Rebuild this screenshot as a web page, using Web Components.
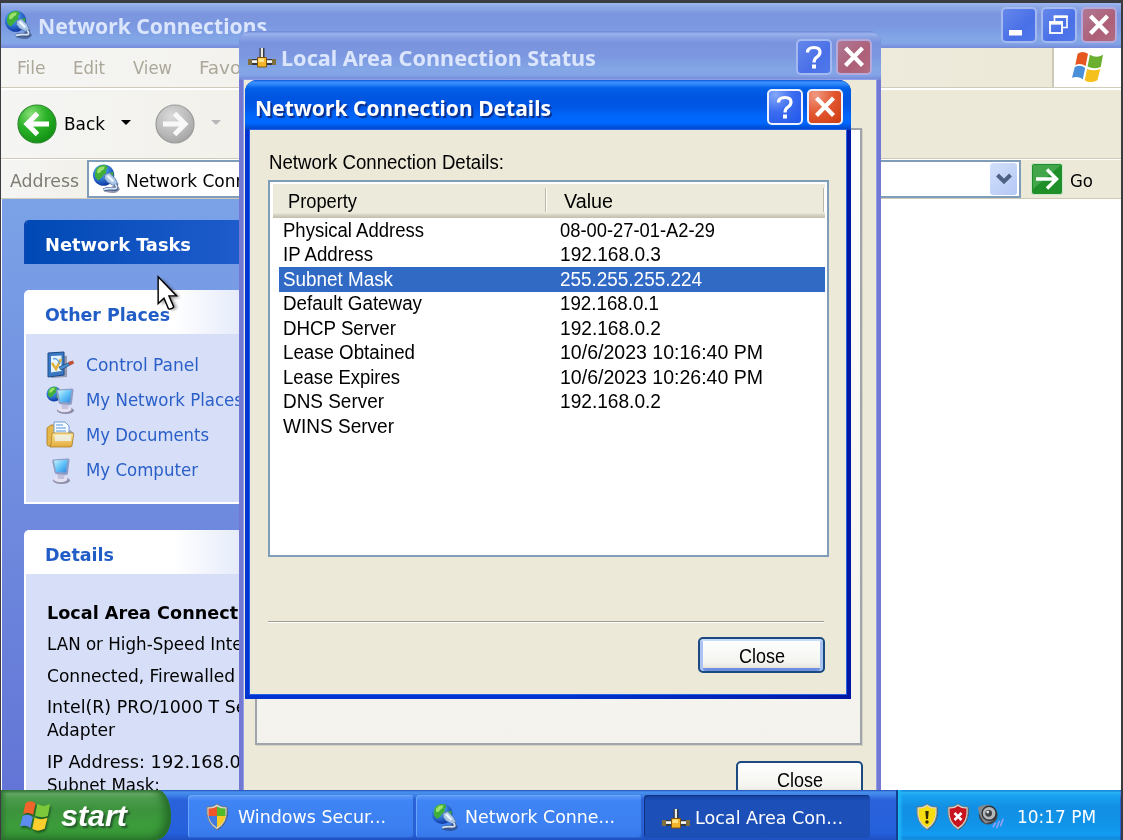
<!DOCTYPE html>
<html lang="en">
<head>
<meta charset="utf-8">
<title>Network Connections</title>
<style>
html,body{margin:0;height:100%;overflow:hidden;background:#3b3c3f}
</style>
</head>
<body>
<xp-desktop></xp-desktop>
<script>
const define = (name, html, after) => {
  const tpl = document.createElement('template');
  tpl.innerHTML = html;
  customElements.define(name, class extends HTMLElement {
    connectedCallback() {
      if (this.shadowRoot) return;
      this.attachShadow({ mode: 'open' }).appendChild(tpl.content.cloneNode(true));
      if (after) after.call(this, this.shadowRoot);
    }
  });
};

/* Single-line label. w = width in pixels of the text (or of its prefix p). */
define('xp-text', `<style>
:host{display:block;white-space:nowrap;line-height:1.2;flex:none}
span{display:inline-block;transform-origin:0 50%}
</style><span></span>`, function (r) {
  const s = r.querySelector('span'), w = +this.getAttribute('w'), t = this.getAttribute('t');
  s.textContent = this.getAttribute('p') || t;
  const k = w / s.getBoundingClientRect().width;
  s.textContent = t;
  const full = s.getBoundingClientRect().width * k;
  s.style.transform = 'scaleX(' + k + ')';
  this.style.width = full + 'px';
});

const flag = (a, b, c, d) => `<svg viewBox="0 0 36 34">
<path d="M7 3Q12-1 18 3L15.500 16Q10 12 4.500 15Z" fill="${a}"/><path d="M20 4Q27 8 34 4L31.500 17Q24 20 17.500 16.500Z" fill="${b}"/>
<path d="M4 17Q10 14 15 18L12.500 30Q7 26 1 28.500Z" fill="${c}"/><path d="M17 19Q24 22 31 19L28 31Q20 35 14.500 31Z" fill="${d}"/></svg>`;
const defs = `<defs>
<radialGradient id="gl" cx=".38" cy=".3" r=".75"><stop offset="0" stop-color="#c9ecff"/><stop offset=".35" stop-color="#3f8fe8"/><stop offset="1" stop-color="#0a2f9c"/></radialGradient>
<linearGradient id="scr" x1="0" y1="0" x2="1" y2="1"><stop offset="0" stop-color="#c8f4ff"/><stop offset=".5" stop-color="#62c4f8"/><stop offset="1" stop-color="#2f86e0"/></linearGradient>
<radialGradient id="grn" cx=".35" cy=".25" r=".85"><stop offset="0" stop-color="#8ee07c"/><stop offset=".45" stop-color="#2db42a"/><stop offset="1" stop-color="#0d8a10"/></radialGradient>
<radialGradient id="gry" cx=".4" cy=".3" r=".8"><stop offset="0" stop-color="#dadada"/><stop offset=".6" stop-color="#b9b9b9"/><stop offset="1" stop-color="#9e9e9e"/></radialGradient>
<linearGradient id="fol" x1="0" y1="0" x2="0" y2="1"><stop offset="0" stop-color="#ffe9a0"/><stop offset="1" stop-color="#e2a93a"/></linearGradient>
</defs>`;
const globe = (x, y, r) => `<g transform="translate(${x} ${y}) scale(${r / 10})"><circle r="10" fill="url(#gl)"/><path d="M-7-6Q-3-11 3-9Q5-6 2-5Q4-2 0 0Q-2 4-5 5Q-9 2-8-2ZM5-2L9-3Q10 3 6 7L3 4Z" fill="#3fae3a"/><path d="M-6-5Q-3-9 1-8Q1-5-2-4Q-3-1-6-2Z" fill="#9be06a"/></g>`;
const monitor = (x, y) => `<g transform="translate(${x} ${y})"><ellipse cx="9.500" cy="22.500" rx="8.500" ry="3.500" fill="#77738f" opacity=".75"/><ellipse cx="8.500" cy="21" rx="7" ry="3.200" fill="#e4e2f2"/><path d="M5 14H13L12 21H6Z" fill="#c4c1dc"/><path d="M1 1.500L16 .500Q18 .500 17.500 2.500L16 15Q16 17 14 17L4 16Q3 16 2.500 14L.300 3.500Q.300 1.500 1 1.500Z" fill="#8f9cc4"/><path d="M2 2.500L15.500 1.800L14 14.500L4 14Z" fill="url(#scr)"/></g>`;
const shield = inner => `<svg viewBox="0 0 24 28"><path d="M13 3Q18 6 23 5Q24 20 13 27Q2 20 3 5Q8 6 13 3" fill="#333" opacity=".55"/><path d="M12 1Q16 4.500 22 4Q23.500 20 12 26.500Q.500 20 2 4Q8 4.500 12 1Z" fill="#d9d9d3" stroke="#6e6e68" stroke-width=".8"/>${inner}</svg>`;
const ICONS = {
  net: `<svg viewBox="0 0 30 30">${defs}<path d="M12 28Q24 33 29 26L25 21Z" fill="#26325a" opacity=".5"/>${globe(12, 11.5, 11)}<path d="M13 11L18 9L24 15L27 21L22 22L16 19L13 15Z" fill="#a9c6e8" stroke="#4d6ea8" stroke-width=".8"/><path d="M16 12L22 18" stroke="#eef7ff" stroke-width="2.500"/><path d="M24 21Q28 27 22 26T12 27" fill="none" stroke="#3c5688" stroke-width="3.500"/><path d="M24 21Q28 26 22 25.500T12 26.500" fill="none" stroke="#d5e4f5" stroke-width="2"/></svg>`,
  lan: `<svg viewBox="0 0 28 22"><path d="M11.500 1H16.500V11H11.500ZM0 12H28V18H0Z" fill="#35383c"/><path d="M12.800 1H15V11H12.800ZM1 13.500H27V16H1Z" fill="#e8eae8"/><path d="M0 12H4V18H0ZM24 12H28V18H24Z" fill="#80703f"/><path d="M4 13.500H24V15H4Z" fill="#fff"/><path d="M9.500 10.500H18.500V20H9.500Z" fill="#f2b52c" stroke="#80560a"/><path d="M10.500 11.500H16V15H10.500Z" fill="#ffe488"/></svg>`,
  back: `<svg viewBox="0 0 40 40">${defs}<circle cx="20" cy="20" r="19" fill="url(#grn)" stroke="#2b8a2b" stroke-width="1.200"/><path d="M32 20H11M20.500 9.500L10 20L20.500 30.500" fill="none" stroke="#fff" stroke-width="5"/></svg>`,
  fwd: `<svg viewBox="0 0 40 40">${defs}<circle cx="20" cy="20" r="19" fill="url(#gry)" stroke="#9b9b9b" stroke-width="1.200"/><path d="M8 20H29M19.500 9.500L30 20L19.500 30.500" fill="none" stroke="#f8f8f8" stroke-width="5"/></svg>`,
  go: `<svg viewBox="0 0 32 32"><rect x=".5" y=".5" width="31" height="31" rx="2.500" fill="#1f8f2a" stroke="#cfe6cf"/><path d="M2 2H30L2 26Z" fill="#6cc070" opacity=".45"/><path d="M5 16H25M16 6.500L25.500 16L16 25.500" fill="none" stroke="#fff" stroke-width="3.400"/></svg>`,
  flag: flag('#e8561f', '#6ab02e', '#4a90d9', '#f5bf1c'),
  sflag: flag('#f0642c', '#7cc83a', '#5d8cf0', '#fbcf2d'),
  cpl: `<svg viewBox="0 0 28 28"><path d="M5 3L21 5V26L5 27Z" fill="#334" opacity=".4"/><path d="M2 2L18 1V24L2 26Z" fill="#3a78c4" stroke="#1d4a8c"/><path d="M5 5L15.500 4.500V20L5 21.500Z" fill="#e6f4ff"/><path d="M6 12L10 18L15 8" fill="none" stroke="#e2b23c" stroke-width="2.500"/><path d="M7 8Q11 6 14 13" fill="none" stroke="#6ba6dc" stroke-width="1.500"/><path d="M13 16L22 12L24 14L15 19Z" fill="#4a90d0" stroke="#274e80" stroke-width=".8"/><path d="M22 11L27 9.500L28 12.500L24 14.500Z" fill="#c0503a"/></svg>`,
  places: `<svg viewBox="0 0 28 28">${defs}${globe(8, 8, 7.5)}${monitor(10, 2)}</svg>`,
  docs: `<svg viewBox="0 0 28 28">${defs}<path d="M2 24L26 26L28 12L24 9Z" fill="#443" opacity=".4"/><path d="M1 7L5 4H10V25H3Q1 25 1 23Z" fill="#e5b64c" stroke="#a87820" stroke-width=".8"/><path d="M8 1H19L23 5V17H8Z" fill="#f8fcff" stroke="#6f9bd0"/><path d="M10 4H17M10 7H20M10 10H20" stroke="#86b6ea" stroke-width="1.400"/><path d="M6 12H26Q28 12 27.500 14L26 24Q26 26 24 26H4Q6 22 6 12Z" fill="url(#fol)" stroke="#b08228" stroke-width=".8"/><path d="M9 14H25V20H9Z" fill="#eef4f2" opacity=".8"/></svg>`,
  comp: `<svg viewBox="0 0 28 28">${defs}${monitor(6, 2)}</svg>`,
  sec: shield('<path d="M12 3.500V13H3.500V5.500Q8 6 12 3.500Z" fill="#ee5528"/><path d="M12 3.500Q16 6 20.500 5.500V13H12Z" fill="#54b82c"/><path d="M3.500 13H12V24.500Q4.500 20 3.500 13Z" fill="#3e7ae0"/><path d="M12 13H20.500Q19.500 20 12 24.500Z" fill="#f8ca24"/>'),
  warn: shield('<path d="M12 3Q16 6 20.500 5.500Q21.500 19 12 24.500Q2.500 19 3.500 5.500Q8 6 12 3Z" fill="#f7dc10"/><path d="M10.300 8H13.700L13 16H11Z" fill="#332a00"/><circle cx="12" cy="19" r="1.700" fill="#332a00"/>'),
  bad: shield('<path d="M12 3Q16 6 20.500 5.500Q21.500 19 12 24.500Q2.500 19 3.500 5.500Q8 6 12 3Z" fill="#c8141e"/><path d="M8.500 10L15.500 17M15.500 10L8.500 17" stroke="#fff" stroke-width="2.600"/>'),
  vol: `<svg viewBox="0 0 30 28"><circle cx="12" cy="12" r="10" fill="#43464a"/><path d="M1 4Q4 1 14 1L17 18L9 21Q2 13 1 4Z" fill="#85898c"/><circle cx="13" cy="10" r="7.500" fill="#b4b8ba" stroke="#303336" stroke-width="1.500"/><circle cx="12.500" cy="10" r="3.600" fill="#3f4246"/><circle cx="11.500" cy="8.700" r="1.500" fill="#e8e8e8"/><path d="M17 25L20 20M21 26L24 18M25 24L28 16" stroke="#8fa0f4" stroke-width="1.800"/></svg>`,
  cursor: `<svg viewBox="0 0 24 38"><path d="M5 3V31L11 26L16 37L21 34L16 24L24 23Z" fill="#222" opacity=".45" style="filter:blur(1.500px)"/><path d="M1.200 1.500V29.500L7.300 24L12 35Q15.500 36 17.500 33L12.500 21.500H20.500Z" fill="#fff" stroke="#000" stroke-width="1.500"/></svg>`,
  help: `<svg viewBox="0 0 36 36"><path d="M11.500 13.500Q11.500 8.500 18 8.500Q24 8.500 24 13Q24 16 21 18Q18 20 18 23.500" fill="none" stroke="#fff" stroke-width="3.200"/><rect x="16" y="25.500" width="4" height="4" fill="#fff"/></svg>`,
  x: `<svg viewBox="0 0 36 36"><path d="M9.500 9L26.500 26.500M26.500 9L9.500 26.500" stroke="#fff" stroke-width="4.200"/></svg>`,
  min: `<svg viewBox="0 0 36 36"><rect x="8" y="23" width="13" height="5.500" fill="#fff"/></svg>`,
  max: `<svg viewBox="0 0 36 36"><path d="M13.500 15V9.500H26V20.500H22" fill="none" stroke="#fff" stroke-width="1.600"/><path d="M12.700 9.700H26.800" stroke="#fff" stroke-width="2.600"/><rect x="9" y="15" width="12" height="11" fill="none" stroke="#fff" stroke-width="1.800"/><path d="M8 16H22" stroke="#fff" stroke-width="3.200"/></svg>`
};
define('xp-icon', `<style>:host{display:block;flex:none}svg{display:block;width:100%;height:100%;overflow:visible}</style>`, function (r) {
  const t = document.createElement('template');
  t.innerHTML = ICONS[this.getAttribute('n')];
  r.appendChild(t.content);
});

define('xp-capbtn', `<style>
:host{display:block;box-sizing:border-box;width:36px;height:36px;border-radius:5px;border:2px solid #eef2ff;flex:none;
background:radial-gradient(circle at 20% 12%,#86a8f8,#3c6cf0 45%,#1f56ea)}
:host([kind=x]){background:radial-gradient(circle at 20% 12%,#f09a80,#e2552e 50%,#cc3c12)}
:host([dim]){border-color:#a3b9f0;background:linear-gradient(135deg,#6487ea,#4a70e8 60%,#5079ea)}
:host([dim][kind=x]){border-color:#b5a9dc;background:linear-gradient(135deg,#b07894,#ad6078 60%,#b16c80)}
xp-icon{width:36px;height:36px;margin:-2px}
</style><xp-icon></xp-icon>`, function (r) {
  const i = document.createElement('xp-icon');
  i.setAttribute('n', this.getAttribute('kind'));
  r.querySelector('xp-icon').replaceWith(i);
});

define('xp-button', `<style>
:host{display:flex;box-sizing:border-box;width:127px;height:36px;border:2px solid #1c4a80;border-radius:5px;align-items:center;justify-content:center;padding-top:3px;background:linear-gradient(#fff,#f3f3ef 75%,#dcd8ce);font:19.500px "Liberation Sans",sans-serif;color:#000}
:host([focus]){box-shadow:inset 0 3px 0 -1px #c8dcfb,inset 3px 0 0 #a9c4f2,inset -3px 0 0 #a9c4f2,inset 0 -3px 0 #6c8fe0}
</style><xp-text t="Close" w="46"></xp-text>`);

define('xp-dialog', `<style>
:host{display:flex;flex-direction:column;box-sizing:border-box;border-radius:12px 12px 0 0;overflow:hidden}
.bar{display:flex;align-items:center;height:50px;box-sizing:border-box;flex:none;padding:4px 8px 0 10px;gap:4px;
background:linear-gradient(#0a50d8 0,#3b93ff 4%,#2b84fa 9%,#0461e8 16%,#0055e0 35%,#0058e8 55%,#0066fb 72%,#0068ff 86%,#0055e0 93%,#0040c4 100%)}
:host([dim]) .bar{height:49px;padding:2px 9px 0 9px;background:linear-gradient(#6f86d6 0,#9ab3ee 6%,#8ba4e4 12%,#7a93de 24%,#7c97e0 50%,#83a6e6 78%,#83a3e6 90%,#7587d8 100%)}
.sp{flex:1}
.in{flex:1;margin:0 5px 5px;background:#ece9d8;display:flex;flex-direction:column;box-shadow:0 0 0 1px #2560e8}
:host([dim]){background:#7378d2}
:host([dim]) .in{box-shadow:0 0 0 1px #8f9fe8;margin:0 5px 0}
:host(:not([dim])){background:linear-gradient(90deg,#0034d0,#0034d0 50%,#0018a4)}
</style><div class="bar"><slot name="title"></slot><div class="sp"></div><slot name="btns"></slot></div><div class="in"><slot></slot></div>`);

define('xp-row', `<style>
:host{display:grid;grid-template-columns:276.500px 1fr;align-items:center;height:24.500px;margin:0 0 0 7px;padding-left:4px;color:#000}
:host([sel]){background:#316ac5;color:#fff}
</style>`, function (r) {
  for (const k of ['a', 'b']) {
    if (!this.getAttribute(k)) continue;
    const t = document.createElement('xp-text');
    t.setAttribute('t', this.getAttribute(k));
    t.setAttribute('w', this.getAttribute('w' + k));
    r.appendChild(t);
  }
});

define('xp-details', `<style>
:host{display:flex;flex-direction:column;padding:0 22px 0 18px;font:19.500px "Liberation Sans",sans-serif;color:#000;flex:1}
.lab{margin:21px 0 0 1px;height:29px}
.list{box-sizing:border-box;width:561px;height:377px;border:2px solid #7f9db9;background:#fff;padding:2px}
.head{display:grid;grid-template-columns:273px 1fr;height:34px;box-sizing:border-box;align-items:center;margin:0 0 0 1px;width:552px;background:linear-gradient(#ebeadb 0 29px,#d6d2c2 31px,#c2beae 34px)}
.head div{height:24px;border-right:1px solid #b9b6a6;box-shadow:1px 0 #fff;margin-top:-3px;display:flex;align-items:center;padding-left:15px}
.head div+div{padding-left:18px;margin-right:1px}
.head xp-text{margin-top:4px}
.sep{margin-top:64px;height:1px;width:556px;background:#a09e90;border-bottom:1px solid #fff;flex:none}
xp-button{margin:14px -1px 0 auto}
</style>
<xp-text class="lab" t="Network Connection Details:" w="235"></xp-text>
<div class="list"><div class="head"><div><xp-text t="Property" w="69"></xp-text></div><div><xp-text t="Value" w="49"></xp-text></div></div>
<xp-row a="Physical Address" wa="141" b="08-00-27-01-A2-29" wb="155"></xp-row>
<xp-row a="IP Address" wa="90" b="192.168.0.3" wb="101"></xp-row>
<xp-row sel a="Subnet Mask" wa="110" b="255.255.255.224" wb="142"></xp-row>
<xp-row a="Default Gateway" wa="139" b="192.168.0.1" wb="99"></xp-row>
<xp-row a="DHCP Server" wa="113" b="192.168.0.2" wb="101"></xp-row>
<xp-row a="Lease Obtained" wa="132" b="10/6/2023 10:16:40 PM" wb="203"></xp-row>
<xp-row a="Lease Expires" wa="117" b="10/6/2023 10:26:40 PM" wb="203"></xp-row>
<xp-row a="DNS Server" wa="101" b="192.168.0.2" wb="101"></xp-row>
<xp-row a="WINS Server" wa="111"></xp-row></div>
<div class="sep"></div><xp-button focus></xp-button>`);

define('xp-group', `<style>
:host{display:flex;flex-direction:column;border-radius:5px 0 0 0;overflow:hidden;background:#d6dff7;border-left:2px solid #fff;box-sizing:border-box;flex:none}
.h{height:44px;display:flex;align-items:center;padding:6px 0 0 19px;box-sizing:border-box;background:linear-gradient(90deg,#fff 50%,#c6d3f7);color:#215dc6;font:bold 18.500px "DejaVu Sans Condensed","DejaVu Sans",sans-serif}
:host([dark]){border-color:#0a48b4}
:host([dark]) .h{background:linear-gradient(90deg,#0049b5,#2a62d4);color:#fff}
</style><div class="h"><slot name="h"></slot></div><slot></slot>`);

define('xp-link', `<style>
:host{display:flex;align-items:center;height:35px;gap:12px;color:#2a5fc8;padding-left:20px}
::slotted(xp-icon){width:28px;height:28px}
</style><slot></slot>`);

define('xp-explorer', `<style>
:host{display:flex;flex-direction:column;font:18px "DejaVu Sans Condensed","DejaVu Sans",sans-serif;color:#000;background:#fff}
.title{height:45px;flex:none;box-sizing:border-box;display:flex;align-items:center;gap:4px;padding:0 4px 1px 3px;background:linear-gradient(#9db8f0 0,#8fa9e6 8%,#7b96df 25%,#7b97e0 50%,#82a6e6 78%,#82a4e6 90%,#7589d8 100%)}
.title xp-icon{width:29px;height:29px;margin-top:-2px}
.title xp-text{font:bold 22px "Noto Sans",sans-serif;color:#dbe6fc;margin-left:1px}
.sp{flex:1}
.menu{display:flex;height:40px;flex:none;box-sizing:border-box;border-bottom:1px solid #cfcbb8;background:linear-gradient(90deg,#f5f5f4,#ece9d8 92%);align-items:center;padding-left:16px;color:#aca899}
.menu xp-text{margin:1px 27.500px 0 0}
.logo{width:69px;height:39px;background:#fff;border-left:2px solid #cdc9b8;display:flex;align-items:center;justify-content:center;box-sizing:border-box}
.logo xp-icon{width:36px;height:32px;margin-top:-2px}
.tools{display:flex;height:71px;flex:none;box-sizing:border-box;border-top:2px solid #fff;border-bottom:1px solid #cfcbb8;background:linear-gradient(90deg,#f5f5f4,#ece9d8 60%);align-items:center;padding:0 0 1px 16px}
.tools xp-icon{width:40px;height:40px}
.tri{border:5px solid transparent;border-top-color:#000;border-bottom:0;margin:-2px 0 0 16px}
.addr{display:flex;height:40px;flex:none;background:linear-gradient(90deg,#f5f5f4,#ece9d8 20%,#ece9d8);border-top:1px solid #fff;border-bottom:1px solid #cfcbb8;box-sizing:border-box;align-items:center;padding-left:9px;color:#7f7c73}
.addr>xp-text{margin-top:3px}
.box{box-sizing:border-box;width:934px;height:38px;margin-left:8px;border:2px solid #7f9db9;background:#fff;color:#000;display:flex;align-items:center;padding:0 2px 0 3px;gap:5px}
.box xp-icon{width:29px;height:29px;margin-top:-1px}
.dd{width:27px;height:32px;border-radius:3px;background:linear-gradient(135deg,#d3e0fd,#b4c8f5);display:flex;align-items:center;justify-content:center}
.dd svg{width:16px;height:12px}
.go{width:32px;height:32px;margin:0 7px 0 10px}
.main{flex:1;min-height:0;display:flex;overflow:hidden}
.side{width:320px;margin-left:1px;box-sizing:border-box;padding:21px 0 0 22px;background:linear-gradient(#7ba2e7,#6375d6);display:flex;flex-direction:column;gap:26px}
.links{padding:13px 0 0;height:170px;box-sizing:border-box;border-bottom:2px solid #fff}
.det{height:300px;padding:28px 0 0 21px;display:flex;flex-direction:column}
.det xp-text{margin-bottom:10px;line-height:21.500px}
.det .t{margin-bottom:1.500px}
.det .b{font-weight:bold;font-size:18.500px;margin-bottom:9.500px}
</style>
<div class="title"><xp-icon n="net"></xp-icon><xp-text t="Network Connections" w="229"></xp-text><div class="sp"></div><xp-capbtn dim kind="min"></xp-capbtn><xp-capbtn dim kind="max"></xp-capbtn><xp-capbtn dim kind="x"></xp-capbtn></div>
<div class="menu"><xp-text t="File" w="28.500"></xp-text><xp-text t="Edit" w="32"></xp-text><xp-text t="View" w="39"></xp-text><xp-text t="Favorites" p="Fav" w="31"></xp-text><div class="sp"></div><div class="logo"><xp-icon n="flag"></xp-icon></div></div>
<div class="tools"><xp-icon n="back"></xp-icon><xp-text t="Back" w="41" style="margin-left:7px"></xp-text><div class="tri"></div><xp-icon n="fwd" style="margin-left:24px"></xp-icon><div class="tri" style="border-top-color:#b8b8b8"></div></div>
<div class="addr"><xp-text t="Address" w="69"></xp-text><div class="box"><xp-icon n="net"></xp-icon><xp-text t="Network Connections" p="Network" w="71" style="margin-top:4px"></xp-text><div class="sp"></div><div class="dd"><svg viewBox="0 0 16 12"><path d="M1.500 2L8 8.500L14.500 2" fill="none" stroke="#4d6185" stroke-width="4"/></svg></div></div><xp-icon class="go" n="go"></xp-icon><xp-text t="Go" w="23" style="color:#000"></xp-text></div>
<div class="main"><div class="side">
<xp-group dark><xp-text slot="h" t="Network Tasks" w="146"></xp-text></xp-group>
<xp-group><xp-text slot="h" t="Other Places" w="125"></xp-text><div class="links">
<xp-link><xp-icon n="cpl"></xp-icon><xp-text t="Control Panel" w="113"></xp-text></xp-link>
<xp-link><xp-icon n="places"></xp-icon><xp-text t="My Network Places" w="157"></xp-text></xp-link>
<xp-link><xp-icon n="docs"></xp-icon><xp-text t="My Documents" w="123"></xp-text></xp-link>
<xp-link><xp-icon n="comp"></xp-icon><xp-text t="My Computer" w="112"></xp-text></xp-link></div></xp-group>
<xp-group><xp-text slot="h" t="Details" w="69"></xp-text><div class="det">
<xp-text class="b" t="Local Area Connection" p="Local Area" w="104"></xp-text>
<xp-text t="LAN or High-Speed Internet" p="LAN or High-Speed" w="158"></xp-text>
<xp-text t="Connected, Firewalled" w="188"></xp-text>
<xp-text class="t" t="Intel(R) PRO/1000 T Server" p="Intel(R) PRO/1000" w="156"></xp-text>
<xp-text t="Adapter" w="68"></xp-text>
<xp-text class="t" t="IP Address: 192.168.0.3" p="IP Address:" w="98"></xp-text>
<xp-text t="Subnet Mask:" w="113"></xp-text></div></xp-group>
</div></div>`);

define('xp-task', `<style>
:host{display:flex;box-sizing:border-box;align-items:center;height:43px;border-radius:4px;background:linear-gradient(#5f9cf8 0,#3f84f4 14%,#3b7ff0 75%,#3577ea 100%);gap:7px;padding-left:15px;box-shadow:inset 1px 1px #6ba4f8,inset -1px -1px #2c62cc;color:#fff;flex:none}
:host([on]){background:linear-gradient(#153f9c,#1c4fb8 14%,#1c4fb6);box-shadow:inset 1px 1px #11327f}
</style><slot></slot>`);

define('xp-taskbar', `<style>
:host{display:flex;align-items:flex-end;font:18px "DejaVu Sans Condensed","DejaVu Sans",sans-serif;color:#fff;background:linear-gradient(#1f4fb8 0,#4a90ee 4%,#3f86e8 9%,#2a62da 20%,#2560dc 85%,#1f50c0 100%)}
.start{width:170px;height:50px;box-sizing:border-box;border-radius:0 14px 16px 0/0 28px 24px 0;background:linear-gradient(#3c7a40 0,#69ad69 7%,#4d9c4e 16%,#3c933c 40%,#3c9c3b 70%,#389a36);box-shadow:inset -6px -2px 8px #256b28,inset 3px 0 4px #357a38;display:flex;align-items:center;padding:1px 0 0 18px;gap:9px;flex:none;margin-right:16px}
.start xp-icon{width:33px;height:32px;filter:drop-shadow(1px 2px 1px #1b551e)}
.start xp-text{font:italic bold 30px "Liberation Sans",sans-serif;text-shadow:2px 2px 2px #24562a;margin-top:1px}
xp-task{width:226px;margin:0 1px 2px}
xp-task xp-icon{width:28px;height:28px}
.tray{width:224px;height:50px;box-sizing:border-box;margin-left:25px;border-left:2px solid #10418f;background:linear-gradient(#1268c8 0,#28b0f4 5%,#18a2f0 12%,#128fe4 35%,#1093e8 65%,#129cf0 90%,#1078d0);box-shadow:inset 3px 0 3px #1fb8f6;display:flex;align-items:center;padding:3px 0 0 17px;gap:7px}
.tray xp-icon{width:24px;height:28px}
</style>
<div class="start"><xp-icon n="sflag"></xp-icon><xp-text t="start" w="66"></xp-text></div>
<xp-task><xp-icon n="sec"></xp-icon><xp-text t="Windows Secur..." w="148"></xp-text></xp-task>
<xp-task><xp-icon n="net"></xp-icon><xp-text t="Network Conne..." w="150" style="margin-left:-1px"></xp-text></xp-task>
<xp-task on style="padding-left:18px"><xp-icon n="lan" style="height:22px;margin-top:5px"></xp-icon><xp-text t="Local Area Con..." w="148" style="margin:3px 0 0 -2px"></xp-text></xp-task>
<div class="tray"><xp-icon n="warn"></xp-icon><xp-icon n="bad"></xp-icon><xp-icon n="vol" style="width:28px"></xp-icon><xp-text t="10:17 PM" w="79" style="margin-left:5px"></xp-text></div>`);

define('xp-desktop', `<style>
:host{display:block;position:relative;width:1123px;height:840px;overflow:hidden;background:#3b3c3f}
:host>*{position:absolute}
xp-explorer{left:1px;top:3px;width:1120px;height:787px}
.st{left:239px;top:31px;width:642px;height:780px}
.dt{left:245px;top:80px;width:606px;height:619px}
.st xp-text,.dt>xp-text{font:bold 22px "Noto Sans",sans-serif}
.st xp-text{color:#dbe6fc}
.dt>xp-text{color:#fff;text-shadow:2px 2px 1px #0a2f8c}
.st xp-icon{width:28px;height:22px;margin-top:3px}
.page{box-sizing:border-box;width:607px;height:617px;margin:48px 0 0 11px;border:2px solid #a0a5ac;background:linear-gradient(#fdfdfe,#f3f2ec);flex:none;box-shadow:1px 1px #d5d2c4}
.st xp-button{margin:16px 13px 0 auto}
xp-taskbar{left:1px;top:790px;width:1120px;height:50px}
.cur{left:157px;top:275px;width:23px;height:37px}
</style>
<xp-explorer></xp-explorer>
<xp-dialog dim class="st"><xp-icon slot="title" n="lan"></xp-icon><xp-text slot="title" t="Local Area Connection Status" w="315" style="margin-left:1px"></xp-text><xp-capbtn slot="btns" dim kind="help"></xp-capbtn><xp-capbtn slot="btns" dim kind="x"></xp-capbtn><div class="page"></div><xp-button></xp-button></xp-dialog>
<xp-dialog class="dt"><xp-text slot="title" t="Network Connection Details" w="296"></xp-text><xp-capbtn slot="btns" kind="help"></xp-capbtn><xp-capbtn slot="btns" kind="x"></xp-capbtn><xp-details></xp-details></xp-dialog>
<xp-taskbar></xp-taskbar>
<xp-icon class="cur" n="cursor"></xp-icon>`);
</script>
</body>
</html>
